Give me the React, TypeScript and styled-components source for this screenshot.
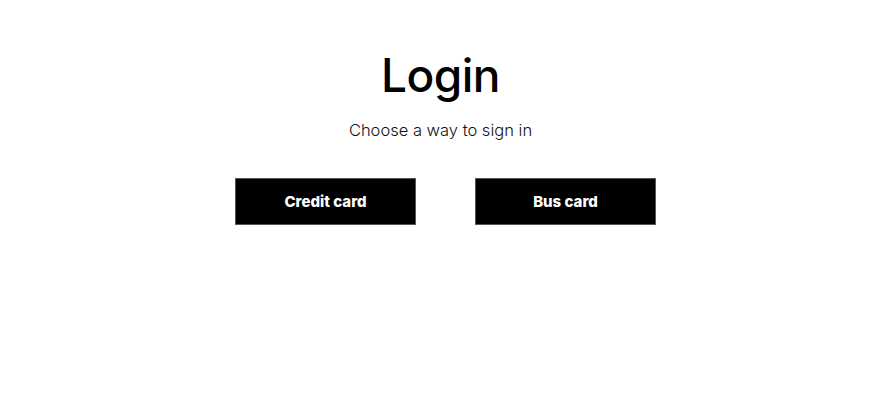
import React from "react";
import styled, { createGlobalStyle } from "styled-components";

const Global = createGlobalStyle`
  html, body { margin: 0; padding: 0; background: #fff; }
  body { font-family: "Inter", "Liberation Sans", sans-serif; }
`;

const Page = styled.main`
  display: flex;
  flex-direction: column;
  align-items: center;
  padding-top: 47px;
  padding-right: 14px;
`;

const Title = styled.h1`
  margin: 0;
  font-family: "Inter", sans-serif;
  font-weight: 500;
  font-size: 46px;
  line-height: 56px;
  letter-spacing: -0.5px;
  color: #000;
`;

const Subtitle = styled.p`
  margin: 16px 0 0;
  font-family: "Inter", sans-serif;
  font-weight: 300;
  font-size: 16.5px;
  line-height: 22px;
  color: #111;
`;

const Buttons = styled.div`
  display: flex;
  gap: 59px;
  margin-top: 37px;
  padding-left: 10px;
`;

const Button = styled.button`
  width: 181px;
  height: 47px;
  background: #000;
  color: #fff;
  border: 1px solid #555;
  font-family: "Inter", sans-serif;
  font-weight: 800;
  font-size: 15px;
  cursor: pointer;
`;

export default function App() {
  return (
    <>
      <Global />
      <Page>
        <Title>Login</Title>
        <Subtitle>Choose a way to sign in</Subtitle>
        <Buttons>
          <Button>Credit card</Button>
          <Button>Bus card</Button>
        </Buttons>
      </Page>
    </>
  );
}
